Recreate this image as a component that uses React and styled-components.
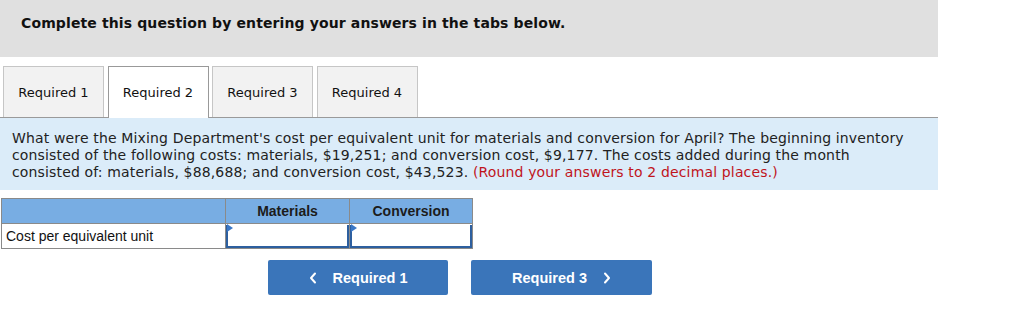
import React from "react";
import styled, { createGlobalStyle } from "styled-components";

const Global = createGlobalStyle`
  html, body { margin: 0; padding: 0; background: #fff; }
  body { font-family: "DejaVu Sans", Verdana, sans-serif; }
`;

const Page = styled.div`
  width: 938px;
  padding-bottom: 20px;
`;

const Header = styled.div`
  box-sizing: border-box;
  height: 57px;
  background: #e0e0e0;
  padding: 15px 21px 0;
  font-size: 14px;
  letter-spacing: 0.12px;
  font-weight: bold;
  color: #111;
`;

const TabRow = styled.div`
  display: flex;
  gap: 3.5px;
  margin-top: 9px;
  padding-left: 3px;
  border-bottom: 1px solid #9a9a9a;
`;

const Tab = styled.div`
  box-sizing: border-box;
  width: 101px;
  height: ${(p) => (p.$active ? "52px" : "51px")};
  margin-bottom: ${(p) => (p.$active ? "-1px" : "0")};
  position: relative;
  z-index: ${(p) => (p.$active ? 1 : 0)};
  display: flex;
  align-items: center;
  justify-content: center;
  font-size: 13px;
  color: #111;
  background: ${(p) => (p.$active ? "#fff" : "#f2f2f2")};
  border: 1px solid ${(p) => (p.$active ? "#999" : "#c6c6c6")};
  border-bottom: none;
  padding-bottom: ${(p) => (p.$active ? "1px" : "0")};
`;

const Panel = styled.div`
  background: #dbecf9;
  padding: 12px 30px 9px 12px;
  font-size: 14px;
  letter-spacing: 0.15px;
  line-height: 17px;
  color: #222;
`;

const Red = styled.span`
  color: #c0141c;
`;

const Table = styled.table`
  margin: 8px 0 0 1px;
  border-collapse: collapse;
  font-family: "Liberation Sans", Arial, sans-serif;
`;

const HeadCell = styled.th`
  box-sizing: border-box;
  height: 25px;
  width: ${(p) => p.$w}px;
  padding: 0;
  background: #78ade3;
  border: 1px solid #8a8a8a;
  font-size: 14px;
  font-weight: bold;
  color: #1c1c1c;
  text-align: center;
`;

const LabelCell = styled.td`
  box-sizing: border-box;
  height: 24px;
  padding: 0 0 0 4px;
  border: 1px solid #8a8a8a;
  font-size: 14px;
  color: #111;
`;

const InputCell = styled.td`
  padding: 0;
  border: 1px solid #8a8a8a;
  height: 24px;
`;

const InputBox = styled.div`
  position: relative;
  box-sizing: border-box;
  height: 23px;
  border: 2px solid #2d5f9f;
  border-top: none;
  background: #fff;
`;

const Flag = styled.span`
  position: absolute;
  left: -1px;
  top: 0;
  width: 0;
  height: 0;
  border-top: 4px solid transparent;
  border-bottom: 4px solid transparent;
  border-left: 6px solid #3b78c6;
  transform: translateY(-1px);
`;

const Nav = styled.div`
  display: flex;
  gap: 23px;
  margin: 11px 0 0 268px;
`;

const NavButton = styled.button`
  box-sizing: border-box;
  width: ${(p) => p.$w}px;
  height: 35px;
  border: none;
  border-radius: 2px;
  background: #3a75ba;
  color: #fff;
  font-family: "Liberation Sans", Arial, sans-serif;
  font-size: 14.5px;
  font-weight: bold;
  display: flex;
  align-items: center;
  justify-content: center;
  gap: 16px;
  padding: 0;
`;

const Chev = ({ dir }) => (
  <svg width="8" height="12" viewBox="0 0 8 12" aria-hidden="true">
    <path
      d={dir === "left" ? "M6 1.5 L2 6 L6 10.5" : "M2 1.5 L6 6 L2 10.5"}
      fill="none"
      stroke="#fff"
      strokeWidth="2"
      strokeLinecap="round"
      strokeLinejoin="round"
    />
  </svg>
);

export default function App() {
  return (
    <Page>
      <Global />
      <Header>Complete this question by entering your answers in the tabs below.</Header>
      <TabRow>
        <Tab>Required 1</Tab>
        <Tab $active>Required 2</Tab>
        <Tab>Required 3</Tab>
        <Tab>Required 4</Tab>
      </TabRow>
      <Panel>
        What were the Mixing Department's cost per equivalent unit for materials and conversion for April? The
        beginning inventory consisted of the following costs: materials, $19,251; and conversion cost, $9,177. The
        costs added during the month consisted of: materials, $88,688; and conversion cost, $43,523.{" "}
        <Red>(Round your answers to 2 decimal places.)</Red>
      </Panel>
      <Table>
        <thead>
          <tr>
            <HeadCell $w={224}></HeadCell>
            <HeadCell $w={124}>Materials</HeadCell>
            <HeadCell $w={123}>Conversion</HeadCell>
          </tr>
        </thead>
        <tbody>
          <tr>
            <LabelCell>Cost per equivalent unit</LabelCell>
            <InputCell>
              <InputBox>
                <Flag />
              </InputBox>
            </InputCell>
            <InputCell>
              <InputBox>
                <Flag />
              </InputBox>
            </InputCell>
          </tr>
        </tbody>
      </Table>
      <Nav>
        <NavButton $w={180}>
          <Chev dir="left" />
          Required 1
        </NavButton>
        <NavButton $w={181}>
          Required 3
          <Chev dir="right" />
        </NavButton>
      </Nav>
    </Page>
  );
}
